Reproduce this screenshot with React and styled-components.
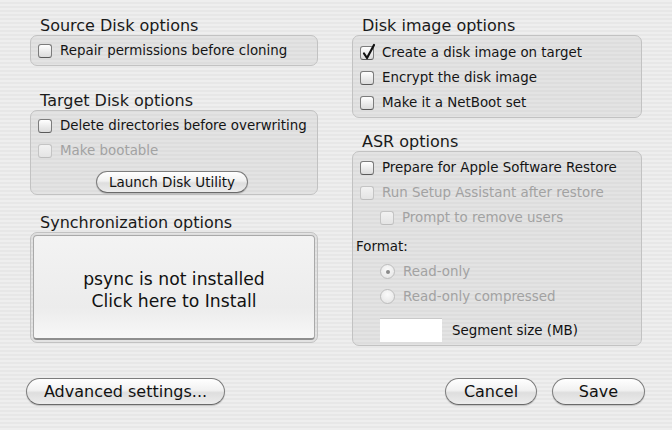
import React from 'react'
import styled, {createGlobalStyle} from "styled-components";

const GlobalStyle = createGlobalStyle`
    html, body {
        margin: 0;
        padding: 0;
    }
    body {
        font-family: "DejaVu Sans", "Liberation Sans", sans-serif;
        color: #111;
    }
`;

const Window = styled.div`
    width: 672px;
    height: 430px;
    box-sizing: border-box;
    padding: 17px 30px 0 30px;
    background-color: #ebebeb;
    background-image: repeating-linear-gradient(
        180deg,
        #eeeeee 0px,
        #eeeeee 2px,
        #e7e7e7 2px,
        #e7e7e7 4px
    );
    display: flex;
    flex-direction: column;
`;

const Columns = styled.div`
    display: grid;
    grid-template-columns: 288px 290px;
    column-gap: 34px;
    align-items: start;
`;

const Column = styled.div`
    display: flex;
    flex-direction: column;
`;

const Group = styled.section`
    margin-top: ${p => p.$top || 0}px;
`;

const GroupTitle = styled.div`
    font-size: 16px;
    line-height: 18px;
    height: 18px;
    padding-left: 10px;
    color: #1a1a1a;
    white-space: nowrap;
`;

const Box = styled.div`
    height: ${p => p.$height}px;
    box-sizing: border-box;
    border: 1px solid #c2c2c2;
    border-radius: 7px;
    background: rgba(0, 0, 0, 0.045);
    padding: ${p => p.$pad || "0 7px"};
    display: flex;
    flex-direction: column;
`;

const Row = styled.label`
    display: flex;
    align-items: center;
    gap: 8px;
    height: 25px;
    flex-shrink: 0;
    padding-left: ${p => p.$indent || 0}px;
    font-size: 13.4px;
    white-space: nowrap;
    color: ${p => (p.$disabled ? "#a2a2a2" : "#151515")};
`;

const Check = styled.span`
    width: 14px;
    height: 14px;
    box-sizing: border-box;
    flex-shrink: 0;
    border: 1px solid ${p => (p.$disabled ? "#c4c4c4" : "#7c7c7c")};
    border-bottom-color: ${p => (p.$disabled ? "#bdbdbd" : "#5a5a5a")};
    border-radius: 3px;
    background: ${p => (p.$disabled
        ? "linear-gradient(#f2f2f2, #e4e4e4)"
        : "linear-gradient(#ffffff, #e9e9e9 60%, #dcdcdc)")};
    position: relative;

    svg {
        position: absolute;
        left: 0px;
        top: -4px;
    }
`;

const Radio = styled.span`
    width: 15px;
    height: 15px;
    box-sizing: border-box;
    flex-shrink: 0;
    border: 1px solid #bdbdbd;
    border-radius: 50%;
    background: radial-gradient(circle at 50% 35%, #fafafa, #e2e2e2);
    display: flex;
    align-items: center;
    justify-content: center;

    &::after {
        content: "";
        width: 4px;
        height: 4px;
        border-radius: 50%;
        background: ${p => (p.$on ? "#8a8a8a" : "transparent")};
    }
`;

const FieldLabel = styled.div`
    height: 25px;
    display: flex;
    align-items: center;
    font-size: 13.4px;
    margin-top: 4px;
    margin-left: -4px;
    color: #151515;
`;

const SegmentRow = styled.div`
    display: flex;
    align-items: center;
    gap: 10px;
    margin-top: 9px;
    padding-left: 20px;
    font-size: 13.4px;
    white-space: nowrap;
`;

const TextField = styled.div`
    width: 62px;
    height: 24px;
    box-sizing: border-box;
    background: #fff;
    border-top: 1px solid #c9c9c9;
`;

const Pill = styled.button`
    height: ${p => p.$h || 27}px;
    width: ${p => p.$w}px;
    border-radius: 14px;
    border: 1px solid #7d7d7d;
    border-bottom-color: #6a6a6a;
    background: linear-gradient(#ffffff 0%, #f1f1f1 45%, #dedede 55%, #ececec 100%);
    box-shadow: 0 1px 1px rgba(0, 0, 0, 0.18);
    font-family: inherit;
    font-size: ${p => p.$fs || 16}px;
    color: #111;
    padding: 0;
    white-space: nowrap;
    display: flex;
    align-items: center;
    justify-content: center;
`;

const CenteredRow = styled.div`
    display: flex;
    justify-content: center;
    margin-top: 8px;
    padding-right: 4px;
`;

const SyncPanel = styled.div`
    flex: 1;
    margin: 2px;
    border: 1px solid #a9a9a9;
    border-bottom: 2px solid #8e8e8e;
    border-radius: 4px;
    background: linear-gradient(#f3f3f3, #ececec 70%, #f7f7f7);
    display: flex;
    flex-direction: column;
    align-items: center;
    justify-content: center;
    font-size: 17.2px;
    line-height: 22px;
    color: #111;
    padding-top: 5px;
    white-space: nowrap;
`;

const Footer = styled.div`
    display: flex;
    align-items: center;
    margin-top: 32px;
    margin-left: -4px;
    margin-right: -3px;
    gap: 15px;
`;

const Spacer = styled.div`
    flex: 1;
`;

const Checkbox = ({label, checked, disabled, indent}) => (
    <Row $disabled={disabled} $indent={indent}>
        <Check $disabled={disabled}>
            {checked && (
                <svg width="16" height="18" viewBox="0 0 16 18">
                    <path d="M3 10.5 L6 15 L13 2" fill="none" stroke="#111" strokeWidth="2.2"
                          strokeLinecap="round" strokeLinejoin="round"/>
                </svg>
            )}
        </Check>
        {label}
    </Row>
);

const RadioItem = ({label, on}) => (
    <Row $disabled $indent={20}>
        <Radio $on={on}/>
        {label}
    </Row>
);

const App = () => {
    return (
        <>
            <GlobalStyle/>
            <Window>
                <Columns>
                    <Column>
                        <Group>
                            <GroupTitle>Source Disk options</GroupTitle>
                            <Box $height={31} $pad="2px 7px 0">
                                <Checkbox label="Repair permissions before cloning"/>
                            </Box>
                        </Group>
                        <Group $top={26}>
                            <GroupTitle>Target Disk options</GroupTitle>
                            <Box $height={85} $pad="2px 7px 0">
                                <Checkbox label="Delete directories before overwriting"/>
                                <Checkbox label="Make bootable" disabled/>
                                <CenteredRow>
                                    <Pill $w={152} $h={22} $fs={13.5}>Launch Disk Utility</Pill>
                                </CenteredRow>
                            </Box>
                        </Group>
                        <Group $top={19}>
                            <GroupTitle>Synchronization options</GroupTitle>
                            <Box $height={111} $pad="0">
                                <SyncPanel>
                                    <div>psync is not installed</div>
                                    <div>Click here to Install</div>
                                </SyncPanel>
                            </Box>
                        </Group>
                    </Column>
                    <Column>
                        <Group>
                            <GroupTitle>Disk image options</GroupTitle>
                            <Box $height={83} $pad="4px 7px 0">
                                <Checkbox label="Create a disk image on target" checked/>
                                <Checkbox label="Encrypt the disk image"/>
                                <Checkbox label="Make it a NetBoot set"/>
                            </Box>
                        </Group>
                        <Group $top={15}>
                            <GroupTitle>ASR options</GroupTitle>
                            <Box $height={195} $pad="3px 7px 0">
                                <Checkbox label="Prepare for Apple Software Restore"/>
                                <Checkbox label="Run Setup Assistant after restore" disabled/>
                                <Checkbox label="Prompt to remove users" disabled indent={20}/>
                                <FieldLabel>Format:</FieldLabel>
                                <RadioItem label="Read-only" on/>
                                <RadioItem label="Read-only compressed"/>
                                <SegmentRow>
                                    <TextField/>
                                    Segment size (MB)
                                </SegmentRow>
                            </Box>
                        </Group>
                    </Column>
                </Columns>
                <Footer>
                    <Pill $w={199}>Advanced settings...</Pill>
                    <Spacer/>
                    <Pill $w={92}>Cancel</Pill>
                    <Pill $w={93}>Save</Pill>
                </Footer>
            </Window>
        </>
    );
};

export default App
